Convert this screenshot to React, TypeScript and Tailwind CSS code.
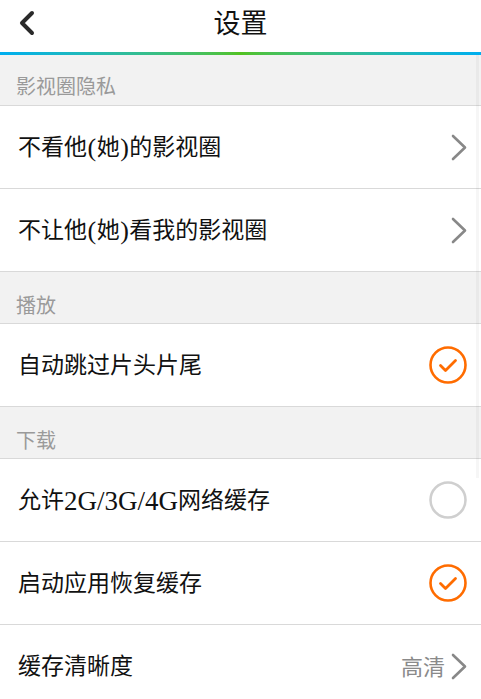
import React from "react";

const font = { fontFamily: '"Liberation Serif", "Noto Sans CJK SC", serif' };

function Chevron({ className = "" }: { className?: string }) {
  return (
    <svg width="16" height="27" viewBox="0 0 16 27" className={className}>
      <path d="M2 2 L14 13.5 L2 25" fill="none" stroke="#888888" strokeWidth="2.6" strokeLinecap="round" strokeLinejoin="round" />
    </svg>
  );
}

function Check({ on }: { on: boolean }) {
  return (
    <svg width="40" height="40" viewBox="0 0 40 40">
      <circle cx="20" cy="20" r="17.5" fill="none" stroke={on ? "#ff6c00" : "#cfcfcf"} strokeWidth="2.6" />
      {on && (
        <path d="M12.5 20.5 L17.5 25.5 L27.5 15.5" fill="none" stroke="#ff6c00" strokeWidth="2.8" strokeLinecap="round" strokeLinejoin="round" />
      )}
    </svg>
  );
}

function Section({ title, first }: { title: string; first?: boolean }) {
  return (
    <div className={`${first ? "h-[51px]" : "h-[52px]"} bg-[#f2f2f2] border-b border-[#d9d9d9] flex items-center pl-[16px] text-[20px] text-[#9a9a9a]`}>
      <span className={first ? "mt-[14px]" : "mt-[16px]"}>{title}</span>
    </div>
  );
}

function P({ c }: { c: string }) {
  return <span className="text-[26px] leading-none mx-[0.5px]">{c}</span>;
}

function Row({ text, right, last }: { text: React.ReactNode; right: React.ReactNode; last?: boolean }) {
  return (
    <div className={`h-[83px] bg-white flex items-center justify-between pl-[18px] pr-[14px] ${last ? "" : "border-b border-[#d9d9d9]"}`}>
      <span className="text-[23px] text-[#111] mt-[2px] flex items-center whitespace-nowrap">{text}</span>
      {right}
    </div>
  );
}

export default function App() {
  return (
    <div className="w-[481px] h-[699px] overflow-hidden bg-white relative" style={font}>
      <div className="h-[52px] flex items-center relative">
        <svg width="18" height="26" viewBox="0 0 18 26" className="absolute left-[18px] top-[10px]">
          <path d="M14 3 L4 13 L14 23" fill="none" stroke="#2a2a2a" strokeWidth="4" strokeLinecap="round" strokeLinejoin="round" />
        </svg>
        <div className="flex-1 text-center text-[27px] text-[#111] -mt-[4px]">设置</div>
      </div>
      <div className="h-[3px] bg-gradient-to-r from-[#00aef0] via-[#52c21e] to-[#00aef0]" />
      <Section title="影视圈隐私" first />
      <Row text={<>不看他<P c="(" />她<P c=")" />的影视圈</>} right={<Chevron />} />
      <Row text={<>不让他<P c="(" />她<P c=")" />看我的影视圈</>} right={<Chevron />} />
      <Section title="播放" />
      <Row text="自动跳过片头片尾" right={<div className="-mr-[1px]"><Check on /></div>} />
      <Section title="下载" />
      <Row
        text={<>允许<span className="text-[27px] leading-none">2G/3G/4G</span>网络缓存</>}
        right={<div className="-mr-[1px]"><Check on={false} /></div>}
      />
      <Row text="启动应用恢复缓存" right={<div className="-mr-[1px]"><Check on /></div>} />
      <Row
        text="缓存清晰度"
        last
        right={
          <div className="flex items-center gap-[6px]">
            <span className="text-[22px] text-[#8a8a8a] mt-[2px]">高清</span>
            <Chevron />
          </div>
        }
      />
      <div className="absolute left-[476px] top-[55px] w-[3px] h-[423px] bg-[rgba(0,0,0,0.035)]" />
    </div>
  );
}
